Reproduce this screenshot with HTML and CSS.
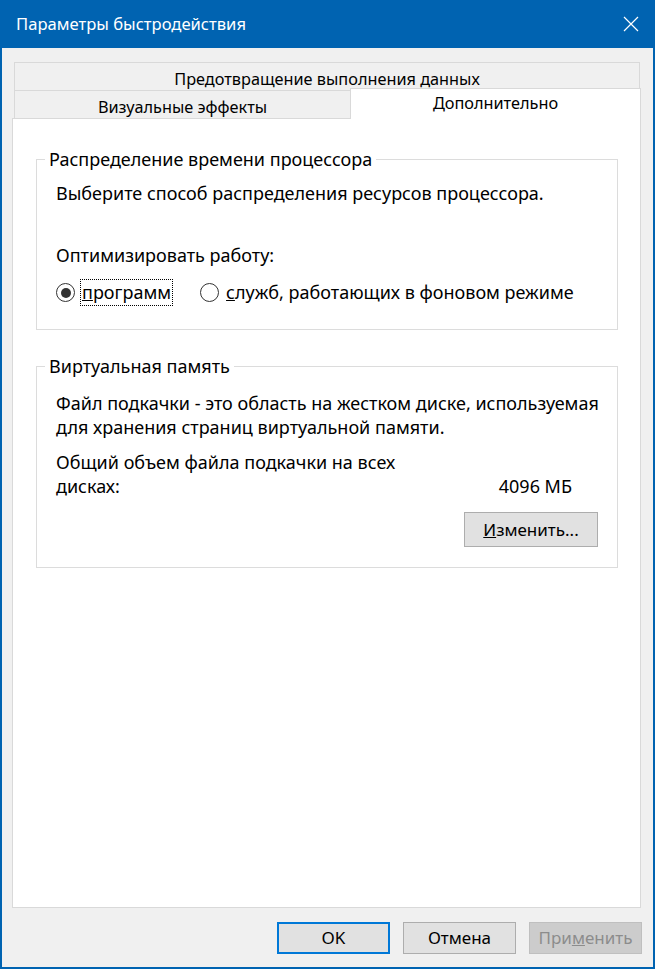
FILE: index.html
```html
<!DOCTYPE html>
<html lang="ru">
<head>
<meta charset="utf-8">
<title>Параметры быстродействия</title>
<link rel="stylesheet" href="styles.css">
</head>
<body>
<div class="window">
  <div class="titlebar">
    <span class="title">Параметры быстродействия</span>
    <span class="close">
      <svg width="16" height="16" viewBox="0 0 16 16"><path d="M1 1L15 15M15 1L1 15" stroke="#fff" stroke-width="1.2" fill="none"/></svg>
    </span>
  </div>
  <div class="content">
    <div class="tabs">
      <div class="tabrow back">
        <div class="tab">Предотвращение выполнения данных</div>
      </div>
      <div class="tabrow front">
        <div class="tab normal">Визуальные эффекты</div>
        <div class="tab selected">Дополнительно</div>
      </div>
    </div>
    <div class="panel">
      <fieldset class="group cpu">
        <legend>Распределение времени процессора</legend>
        <p class="line">Выберите способ распределения ресурсов процессора.</p>
        <p class="line optimize">Оптимизировать работу:</p>
        <div class="radios">
          <span class="radio checked"></span>
          <span class="radio-label focus"><u>п</u>рограмм</span>
          <span class="radio second"></span>
          <span class="radio-label"><u>с</u>лужб, работающих в фоновом режиме</span>
        </div>
      </fieldset>
      <fieldset class="group vm">
        <legend>Виртуальная память</legend>
        <p class="line desc">Файл подкачки - это область на жестком диске, используемая<br>для хранения страниц виртуальной памяти.</p>
        <div class="total">
          <p class="line">Общий объем файла подкачки на всех<br>дисках:</p>
          <span class="line value">4096 МБ</span>
        </div>
        <div class="change-row">
          <button class="btn change"><u>И</u>зменить...</button>
        </div>
      </fieldset>
    </div>
    <div class="buttons">
      <button class="btn ok">OK</button>
      <button class="btn">Отмена</button>
      <button class="btn disabled">При<u>м</u>енить</button>
    </div>
  </div>
</div>
</body>
</html>
```
FILE: styles.css
```css
* { box-sizing: border-box; }
html, body { margin: 0; padding: 0; }
body {
  font-family: "Noto Sans", "Open Sans", sans-serif;
  font-size: 18px;
  color: #000;
  background: #f0f0f0;
}
.window {
  width: 655px;
  height: 969px;
  display: flex;
  flex-direction: column;
  background: #0063b1;
}
.titlebar {
  height: 48px;
  display: flex;
  align-items: center;
  justify-content: space-between;
  padding-left: 16px;
  color: #fff;
  flex: none;
}
.title { line-height: 48px; font-size: 16.6px; }
.close {
  width: 48px;
  height: 48px;
  display: flex;
  align-items: center;
  justify-content: center;
}
.content {
  flex: 1;
  margin: 0 2px 2px 2px;
  background: #f0f0f0;
  display: flex;
  flex-direction: column;
  padding: 14px 0 13px 0;
}
.tabs {
  margin-left: 10px;
  width: 629px;
  flex: none;
  font-size: 16.3px;
}
.tabrow { display: flex; }
.tabrow.back { padding: 0 1px 0 2px; }
.tabrow.front { padding-left: 2px; height: 28px; }
.tab {
  border: 1px solid #d9d9d9;
  border-bottom: none;
  background: #f0f0f0;
  text-align: center;
  line-height: 22px;
  white-space: nowrap;
}
.back .tab {
  flex: 1;
  height: 28px;
  padding-top: 5px;
}
.tab.normal {
  width: 336px;
  height: 28px;
  padding-top: 5px;
  border-right: none;
}
.tab.selected {
  flex: 1;
  height: 31px;
  margin-top: -2px;
  padding-top: 3px;
  background: #fff;
  position: relative;
  z-index: 1;
}
.panel {
  flex: 1;
  width: 629px;
  margin-left: 10px;
  background: #fff;
  border: 1px solid #d9d9d9;
  padding: 28px 22px 0 23px;
}
.group {
  margin: 0;
  border: 1px solid #dcdcdc;
  padding: 0 19px 0 19px;
  min-width: 0;
}
.group legend {
  margin-left: -11px;
  padding: 0 4px;
  line-height: 24px;
}
.line {
  margin: 0;
  line-height: 24px;
  white-space: nowrap;
}
.cpu { padding-top: 10px; padding-bottom: 23px; }
.optimize { margin-top: 38px; }
.radios {
  margin-top: 12px;
  display: flex;
  align-items: center;
  height: 27px;
}
.radio {
  width: 19px;
  height: 19px;
  border: 1.5px solid #333;
  border-radius: 50%;
  display: flex;
  align-items: center;
  justify-content: center;
  flex: none;
}
.radio.checked::after {
  content: "";
  width: 10px;
  height: 10px;
  border-radius: 50%;
  background: #333;
}
.radio-label {
  margin-left: 5px;
  line-height: 25px;
  padding: 0 1px;
  border: 1px solid transparent;
  white-space: nowrap;
}
.radio-label.focus { border: 1px dotted #000; }
.radio.second { margin-left: 27px; }
.vm { margin-top: 24px; padding-top: 13px; padding-bottom: 20px; }
.total {
  margin-top: 11px;
  display: flex;
  justify-content: space-between;
  align-items: flex-end;
}
.value { margin-right: 26px; }
.change-row {
  margin-top: 14px;
  display: flex;
  justify-content: flex-end;
}
.btn {
  font-family: inherit;
  font-size: 17px;
  color: #000;
  background: #e1e1e1;
  border: 1px solid #adadad;
  width: 113px;
  height: 32px;
  padding: 0;
  line-height: 22px;
}
.btn.change { width: 134px; height: 35px; }
.btn.ok { border: 2px solid #0078d7; }
.btn.disabled {
  background: #cccccc;
  border-color: #bfbfbf;
  color: #8c8c8c;
}
.buttons {
  margin-top: 14px;
  display: flex;
  justify-content: flex-end;
  gap: 13px;
  padding-right: 11px;
  flex: none;
}
```
